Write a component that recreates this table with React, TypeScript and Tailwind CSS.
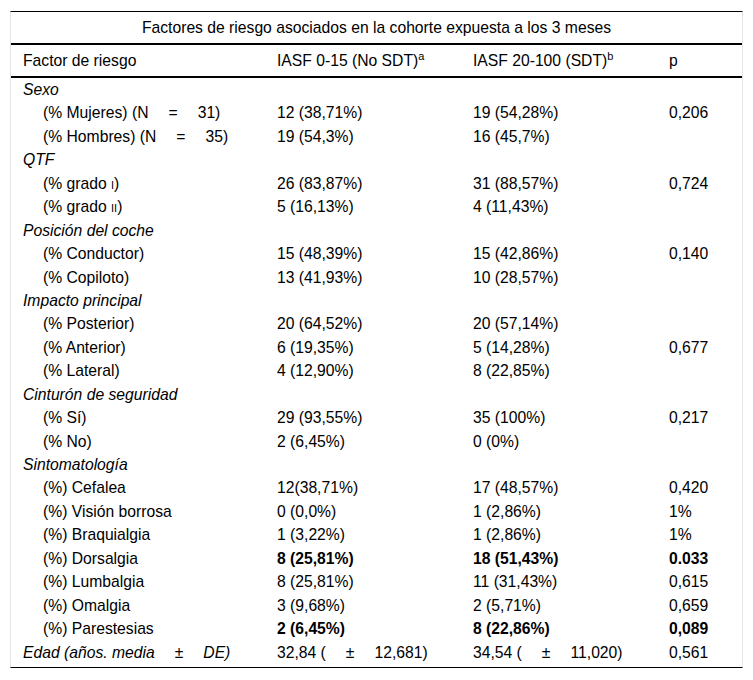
type Row = {
  label: React.ReactNode;
  group?: boolean;
  a?: React.ReactNode;
  b?: React.ReactNode;
  p?: string;
  bold?: boolean;
};

function Eq({ n }: { n: string }) {
  return (
    <>
      (N<span className="mx-[20px]">=</span>
      {n})
    </>
  );
}

function Pm({ v, sd }: { v: string; sd: string }) {
  return (
    <>
      {v} (<span className="mx-[20px]">±</span>
      {sd})
    </>
  );
}

const rows: Row[] = [
  { label: "Sexo", group: true },
  { label: <>(% Mujeres) <Eq n="31" /></>, a: "12 (38,71%)", b: "19 (54,28%)", p: "0,206" },
  { label: <>(% Hombres) <Eq n="35" /></>, a: "19 (54,3%)", b: "16 (45,7%)" },
  { label: "QTF", group: true },
  { label: <>(% grado <span className="text-[11px]">I</span>)</>, a: "26 (83,87%)", b: "31 (88,57%)", p: "0,724" },
  { label: <>(% grado <span className="text-[11px]">II</span>)</>, a: "5 (16,13%)", b: "4 (11,43%)" },
  { label: "Posición del coche", group: true },
  { label: "(% Conductor)", a: "15 (48,39%)", b: "15 (42,86%)", p: "0,140" },
  { label: "(% Copiloto)", a: "13 (41,93%)", b: "10 (28,57%)" },
  { label: "Impacto principal", group: true },
  { label: "(% Posterior)", a: "20 (64,52%)", b: "20 (57,14%)" },
  { label: "(% Anterior)", a: "6 (19,35%)", b: "5 (14,28%)", p: "0,677" },
  { label: "(% Lateral)", a: "4 (12,90%)", b: "8 (22,85%)" },
  { label: "Cinturón de seguridad", group: true },
  { label: "(% Sí)", a: "29 (93,55%)", b: "35 (100%)", p: "0,217" },
  { label: "(% No)", a: "2 (6,45%)", b: "0 (0%)" },
  { label: "Sintomatología", group: true },
  { label: "(%) Cefalea", a: "12(38,71%)", b: "17 (48,57%)", p: "0,420" },
  { label: "(%) Visión borrosa", a: "0 (0,0%)", b: "1 (2,86%)", p: "1%" },
  { label: "(%) Braquialgia", a: "1 (3,22%)", b: "1 (2,86%)", p: "1%" },
  { label: "(%) Dorsalgia", a: "8 (25,81%)", b: "18 (51,43%)", p: "0.033", bold: true },
  { label: "(%) Lumbalgia", a: "8 (25,81%)", b: "11 (31,43%)", p: "0,615" },
  { label: "(%) Omalgia", a: "3 (9,68%)", b: "2 (5,71%)", p: "0,659" },
  { label: "(%) Parestesias", a: "2 (6,45%)", b: "8 (22,86%)", p: "0,089", bold: true },
];

export default function App() {
  return (
    <div className="min-h-[680px] bg-white px-[10px] pt-[11px] font-['Liberation_Sans',Arial,sans-serif] text-[15.7px] text-black">
      <div className="w-[733px] border-x border-t border-x-[#e4e4e4] border-t-black border-b border-b-black pb-[3px]">
        <div className="flex h-[33px] items-center justify-center border-b-2 border-black">
          Factores de riesgo asociados en la cohorte expuesta a los 3 meses
        </div>
        <div className="grid h-[33px] grid-cols-[254px_196px_196px_1fr] items-center border-b-2 border-black pl-[12px]">
          <div>Factor de riesgo</div>
          <div>
            IASF 0-15 (No SDT)<sup className="text-[11px]">a</sup>
          </div>
          <div>
            IASF 20-100 (SDT)<sup className="text-[11px]">b</sup>
          </div>
          <div>p</div>
        </div>
        <div className="pl-[12px]">
          {rows.map((r, i) => (
            <div key={i} className="grid h-[23.45px] grid-cols-[254px_196px_196px_1fr] items-center">
              {r.group ? (
                <div className="col-span-4 italic">{r.label}</div>
              ) : (
                <>
                  <div className="pl-[20px]">{r.label}</div>
                  <div className={r.bold ? "font-bold" : ""}>{r.a}</div>
                  <div className={r.bold ? "font-bold" : ""}>{r.b}</div>
                  <div className={r.bold ? "font-bold" : ""}>{r.p}</div>
                </>
              )}
            </div>
          ))}
          <div className="grid h-[23.45px] grid-cols-[254px_196px_196px_1fr] items-center">
            <div className="italic">
              Edad (años. media<span className="mx-[20px]">±</span>DE)
            </div>
            <div>
              <Pm v="32,84" sd="12,681" />
            </div>
            <div>
              <Pm v="34,54" sd="11,020" />
            </div>
            <div>0,561</div>
          </div>
        </div>
      </div>
    </div>
  );
}
